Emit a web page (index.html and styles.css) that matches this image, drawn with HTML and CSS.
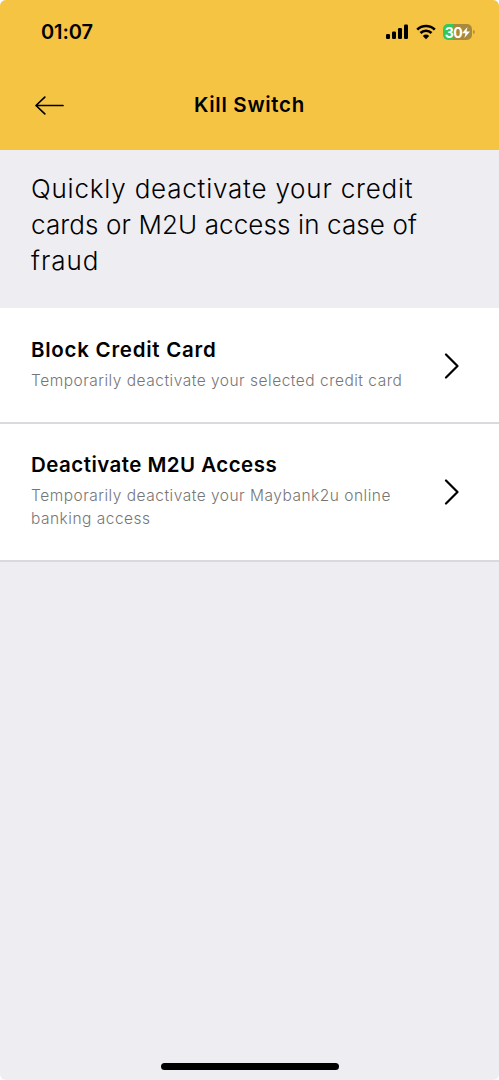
FILE: index.html
```html
<!DOCTYPE html>
<html lang="en">
<head>
<meta charset="utf-8">
<title>Kill Switch</title>
<link rel="stylesheet" href="styles.css">
</head>
<body>
<div class="screen">
  <header class="header">
    <div class="status">
      <span class="time">01:07</span>
      <div class="indicators">
        <svg class="signal" width="23" height="16" viewBox="0 0 23 16"><rect x="0" y="10" width="4" height="5" rx="1.2"/><rect x="6" y="7.500" width="4" height="7.500" rx="1.200"/><rect x="12" y="4" width="4" height="11" rx="1.200"/><rect x="18" y="0.500" width="4" height="14.500" rx="1.200"/></svg>
        <svg class="wifi" width="20" height="16" viewBox="0 0 20 16"><path d="M1.200 5.600a12.600 12.600 0 0 1 17.600 0M4.500 9a7.900 7.900 0 0 1 11 0" fill="none" stroke="#000" stroke-width="2.700"/><path d="M10 15.300l-3.200-3.300a4.700 4.700 0 0 1 6.400 0z"/></svg>
        <div class="battery"><span class="level">30</span><svg class="bolt" width="8" height="11" viewBox="0 0 8 11"><path d="M5.500 0L0 6.200h3.500L2.300 11 8 4.600H4.500z"/></svg></div>
      </div>
    </div>
    <nav class="nav">
      <svg class="back" width="30" height="20" viewBox="0 0 30 20"><path d="M28 10.500H1M9.800 2.200L1 10.500l8.800 8.300"/></svg>
      <h1 class="title">Kill Switch</h1>
    </nav>
  </header>
  <p class="intro"><span class="line-1">Quickly deactivate your credit</span><br><span class="line-2">cards or M2U access in case of</span><br><span class="line-3">fraud</span></p>
  <main class="list">
    <a class="row">
      <div class="copy"><h2 class="name">Block Credit Card</h2><p class="detail">Temporarily deactivate your selected credit card</p></div>
      <svg class="chevron" width="16" height="26" viewBox="0 0 16 26"><path d="M2 1.500L13.500 13 2 24.500"/></svg>
    </a>
    <a class="row row-tall">
      <div class="copy"><h2 class="name name-wide">Deactivate M2U Access</h2><p class="detail">Temporarily deactivate your Maybank2u online<br>banking access</p></div>
      <svg class="chevron" width="16" height="26" viewBox="0 0 16 26"><path d="M2 1.500L13.500 13 2 24.500"/></svg>
    </a>
  </main>
  <div class="home"></div>
</div>
</body>
</html>
```
FILE: styles.css
```css
* { box-sizing: border-box; }
body { margin: 0; background: #fff; font-family: Inter, "Liberation Sans", sans-serif; color: #000; }
h1, h2, p { margin: 0; }
.screen { display: flex; flex-direction: column; width: 499px; height: 1080px; overflow: hidden; border-radius: 6px; background: #eeedf2; }
.header { height: 150px; background: #f5c443; }
.status { display: flex; justify-content: space-between; align-items: center; height: 64px; padding: 0 27px 0 41px; }
.time { font-size: 20px; font-weight: 600; letter-spacing: -0.1px; line-height: 24px; }
.indicators { display: flex; align-items: center; }
.wifi { margin: 0 7px; }
.battery { position: relative; display: flex; align-items: center; justify-content: center; width: 29px; height: 16px; border-radius: 5px; background: linear-gradient(90deg, #35c759 0 33%, #a88a3c 33%); color: #fff; font-size: 14px; font-weight: 700; letter-spacing: -0.4px; }
.bolt { fill: #fff; }
.battery::after { content: ""; position: absolute; left: 30px; top: 6px; width: 2px; height: 4px; border-radius: 0 2px 2px 0; background: #b69643; }
.nav { display: grid; grid-template-columns: 30px 1fr 30px; align-items: center; height: 82px; padding: 0 35px; }
.back, .chevron { fill: none; stroke: #000; stroke-width: 2; stroke-linecap: round; stroke-linejoin: round; }
.back { stroke-width: 1.7; }
.chevron { stroke-width: 2.2; margin-top: 4px; }
.title { padding-bottom: 2px; text-align: center; font-size: 20.5px; font-weight: 600; letter-spacing: 0.7px; }
.intro { height: 158px; padding: 21px 31px 0; font-size: 26px; line-height: 36px; font-weight: 300; white-space: nowrap; }
.line-1 { letter-spacing: 0.79px; }
.line-2 { letter-spacing: 0.11px; }
.line-3 { letter-spacing: 0.95px; }
.list { background: #fff; }
.row { display: flex; align-items: center; justify-content: space-between; padding: 27px 39px 30px 31px; border-bottom: 2px solid #dadade; }
.row-tall { padding-top: 26px; }
.name { font-size: 20.5px; line-height: 30px; font-weight: 600; letter-spacing: 0.74px; white-space: nowrap; }
.name-wide { letter-spacing: 0.46px; }
.detail { margin-top: 4px; font-size: 15.5px; line-height: 23px; font-weight: 300; letter-spacing: 0.5px; color: #767676; white-space: nowrap; }
.home { width: 178px; height: 7px; margin: auto auto 10px; border-radius: 4px; background: #000; }
```
